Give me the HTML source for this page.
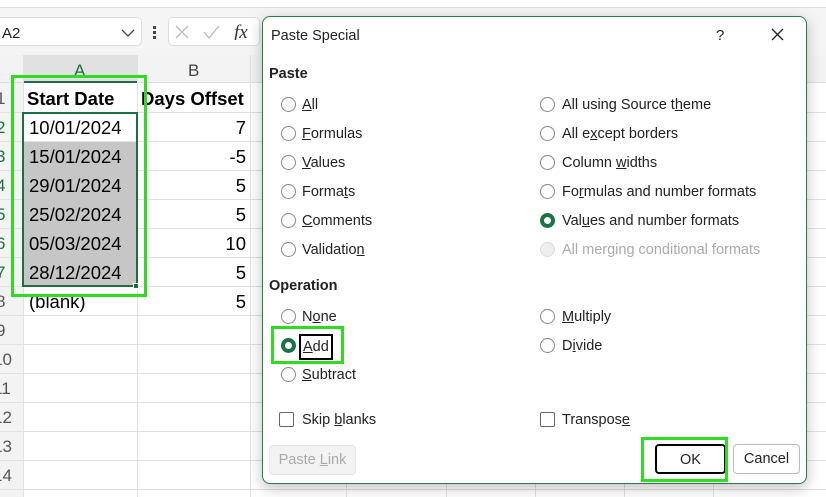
<!DOCTYPE html>
<html><head><style>
*{box-sizing:border-box;margin:0;padding:0}
body{width:826px;height:497px;overflow:hidden;background:#fff;font-family:"Liberation Sans",sans-serif;position:relative}
.a{position:absolute}
.hl{position:absolute;left:0;width:826px;height:1px;background:#e1e1e1}
.vl{position:absolute;top:55px;width:1px;height:442px;background:#e1e1e1}
.cell{position:absolute;font-size:18.5px;color:#000;height:29px;line-height:30px}
.rn{position:absolute;left:-4px;font-size:17px;color:#555;height:29px;line-height:30px;white-space:nowrap}
.dlg{position:absolute;left:262px;top:16px;width:545px;height:468px;background:#fff;border:1px solid #2a7a4b;border-radius:8px;box-shadow:0 4px 14px rgba(0,0,0,.25)}
.t{position:absolute;font-size:14.5px;color:#222;white-space:nowrap;margin-top:1px}
.r{position:absolute;width:15px;height:15px;border:1px solid #888;border-radius:50%;background:#fff}
.r.on{border:4px solid #1a7343}
.r.dis{border-color:#ddd;background:#eee}
.cb{position:absolute;width:15px;height:15px;border:1px solid #666;border-radius:2px}
.btn{position:absolute;height:30px;border:1px solid #bbb;border-radius:4px;font-size:14.5px;text-align:center;line-height:28px;color:#222;background:#fff}
.g{position:absolute;border:3px solid #2fdc1f}
u{text-decoration:underline}
</style></head><body>
<div class="a" style="left:0;top:0;width:826px;height:8px;background:#fff;border-bottom:1px solid #e0e0e0;box-shadow:0 2px 4px rgba(0,0,0,.08)"></div>
<div class="a" style="left:0;top:8px;width:826px;height:47px;background:#f5f5f5"></div>
<div class="a" style="left:-6px;top:17px;width:148px;height:29px;background:#fff;border:1px solid #ddd;border-radius:5px"></div>
<div class="t" style="left:2px;top:24px;font-size:15px">A2</div>
<svg class="a" style="left:121px;top:29px" width="14" height="8"><path d="M1 1l6 6 6-6" stroke="#444" fill="none" stroke-width="1.3"/></svg>
<div class="a" style="left:153px;top:26px;width:3px;height:3px;background:#444;box-shadow:0 5px 0 #444,0 10px 0 #444"></div>
<div class="a" style="left:168px;top:17px;width:92px;height:29px;background:#fff;border:1px solid #ddd;border-radius:5px"></div>
<svg class="a" style="left:174px;top:24px" width="80" height="16"><path d="M2 2l12 12M14 2L2 14" stroke="#bbb" stroke-width="1.3"/><path d="M30 8l5 6 10-12" stroke="#bbb" fill="none" stroke-width="1.3"/><text x="60" y="14" font-family="Liberation Serif" font-style="italic" font-size="19" fill="#333">fx</text></svg>
<div class="a" style="left:0;top:55px;width:826px;height:28px;background:#f3f3f3;border-bottom:1px solid #ddd"></div>
<div class="a" style="left:23px;top:55px;width:115px;height:28px;background:#e1e1e1;border-bottom:2px solid #1e6e44"></div>
<div class="a" style="left:0;top:83px;width:23px;height:414px;background:#f3f3f3"></div>
<div class="t" style="left:74px;top:60px;font-size:17px;color:#1e6e44">A</div>
<div class="t" style="left:188px;top:60px;font-size:17px;color:#444">B</div>
<div class="vl" style="left:23px"></div><div class="vl" style="left:137px"></div><div class="vl" style="left:250px"></div>
<div class="hl" style="top:112px"></div><div class="hl" style="top:141px"></div><div class="hl" style="top:170px"></div><div class="hl" style="top:199px"></div><div class="hl" style="top:228px"></div><div class="hl" style="top:257px"></div><div class="hl" style="top:286px"></div><div class="hl" style="top:315px"></div><div class="hl" style="top:344px"></div><div class="hl" style="top:373px"></div><div class="hl" style="top:402px"></div><div class="hl" style="top:431px"></div><div class="hl" style="top:460px"></div><div class="hl" style="top:489px"></div>
<div class="vl" style="left:346px"></div><div class="vl" style="left:446px"></div><div class="vl" style="left:535px"></div><div class="vl" style="left:624px"></div><div class="vl" style="left:713px"></div>
<div class="a" style="left:24px;top:142px;width:113px;height:144px;background:#c6c6c6"></div>
<div class="a" style="left:22px;top:112px;width:116px;height:175px;border:2px solid #1e6e44"></div>
<div class="a" style="left:133px;top:283px;width:6px;height:6px;background:#1e6e44;border:1px solid #fff"></div>
<div class="rn" style="top:84px">1</div><div class="rn" style="top:113px;color:#1e6e44">2</div><div class="rn" style="top:142px;color:#1e6e44">3</div><div class="rn" style="top:171px;color:#1e6e44">4</div><div class="rn" style="top:200px;color:#1e6e44">5</div><div class="rn" style="top:229px;color:#1e6e44">6</div><div class="rn" style="top:258px;color:#1e6e44">7</div><div class="rn" style="top:287px">8</div><div class="rn" style="top:316px">9</div><div class="rn" style="top:345px;left:-7px">10</div><div class="rn" style="top:374px;left:-7px">11</div><div class="rn" style="top:403px;left:-7px">12</div><div class="rn" style="top:432px;left:-7px">13</div><div class="rn" style="top:461px;left:-7px">14</div>
<div class="cell" style="left:27px;top:84px;font-weight:bold">Start Date</div>
<div class="cell" style="left:141px;top:84px;font-weight:bold">Days Offset</div>
<div class="cell" style="left:29px;top:113px">10/01/2024</div>
<div class="cell" style="left:29px;top:142px">15/01/2024</div>
<div class="cell" style="left:29px;top:171px">29/01/2024</div>
<div class="cell" style="left:29px;top:200px">25/02/2024</div>
<div class="cell" style="left:29px;top:229px">05/03/2024</div>
<div class="cell" style="left:29px;top:258px">28/12/2024</div>
<div class="cell" style="left:29px;top:287px">(blank)</div>
<div class="cell" style="left:200px;width:46px;text-align:right;top:113px">7</div>
<div class="cell" style="left:200px;width:46px;text-align:right;top:142px">-5</div>
<div class="cell" style="left:200px;width:46px;text-align:right;top:171px">5</div>
<div class="cell" style="left:200px;width:46px;text-align:right;top:200px">5</div>
<div class="cell" style="left:200px;width:46px;text-align:right;top:229px">10</div>
<div class="cell" style="left:200px;width:46px;text-align:right;top:258px">5</div>
<div class="cell" style="left:200px;width:46px;text-align:right;top:287px">5</div>
<div class="g" style="left:11px;top:75px;width:136px;height:222px"></div>

<div class="dlg"></div>
<div class="t" style="left:271px;top:27px">Paste Special</div>
<div class="t" style="left:716px;top:26px;font-size:15px">?</div>
<svg class="a" style="left:771px;top:28px" width="13" height="13"><path d="M1 1l11 11M12 1L1 12" stroke="#222" stroke-width="1.3"/></svg>
<div class="t" style="left:269px;top:65px;font-weight:bold">Paste</div>
<div class="r" style="left:281px;top:97px"></div><div class="t" style="left:302px;top:96px"><u>A</u>ll</div>
<div class="r" style="left:281px;top:126px"></div><div class="t" style="left:302px;top:125px"><u>F</u>ormulas</div>
<div class="r" style="left:281px;top:155px"></div><div class="t" style="left:302px;top:154px"><u>V</u>alues</div>
<div class="r" style="left:281px;top:184px"></div><div class="t" style="left:302px;top:183px">Forma<u>t</u>s</div>
<div class="r" style="left:281px;top:213px"></div><div class="t" style="left:302px;top:212px"><u>C</u>omments</div>
<div class="r" style="left:281px;top:242px"></div><div class="t" style="left:302px;top:241px">Validatio<u>n</u></div>
<div class="r" style="left:540px;top:97px"></div><div class="t" style="left:562px;top:96px">All using Source t<u>h</u>eme</div>
<div class="r" style="left:540px;top:126px"></div><div class="t" style="left:562px;top:125px">All e<u>x</u>cept borders</div>
<div class="r" style="left:540px;top:155px"></div><div class="t" style="left:562px;top:154px">Column <u>w</u>idths</div>
<div class="r" style="left:540px;top:184px"></div><div class="t" style="left:562px;top:183px">Fo<u>r</u>mulas and number formats</div>
<div class="r on" style="left:540px;top:213px"></div><div class="t" style="left:562px;top:212px">Val<u>u</u>es and number formats</div>
<div class="r dis" style="left:540px;top:242px"></div><div class="t" style="left:562px;top:241px;color:#aaa">All merging conditional formats</div>
<div class="t" style="left:269px;top:277px;font-weight:bold">Operation</div>
<div class="r" style="left:281px;top:309px"></div><div class="t" style="left:302px;top:308px">N<u>o</u>ne</div>
<div class="r on" style="left:281px;top:338px"></div><div class="t" style="left:299px;top:333px;border:2px solid #000;padding:2px 2px;line-height:18px"><u>A</u>dd</div>
<div class="r" style="left:281px;top:367px"></div><div class="t" style="left:302px;top:366px"><u>S</u>ubtract</div>
<div class="r" style="left:540px;top:309px"></div><div class="t" style="left:562px;top:308px"><u>M</u>ultiply</div>
<div class="r" style="left:540px;top:338px"></div><div class="t" style="left:562px;top:337px">D<u>i</u>vide</div>
<div class="cb" style="left:279px;top:412px"></div><div class="t" style="left:302px;top:411px">Skip <u>b</u>lanks</div>
<div class="cb" style="left:540px;top:412px"></div><div class="t" style="left:562px;top:411px">Transpos<u>e</u></div>
<div class="btn" style="left:269px;top:445px;width:87px;background:#f3f3f3;border-color:#e5e5e5;color:#aaa">Paste <u>L</u>ink</div>
<div class="btn" style="left:655px;top:444px;width:71px;border:2px solid #000">OK</div>
<div class="btn" style="left:733px;top:444px;width:67px">Cancel</div>
<div class="g" style="left:271px;top:326px;width:73px;height:38px"></div>
<div class="g" style="left:641px;top:437px;width:87px;height:45px"></div>
</body></html>
